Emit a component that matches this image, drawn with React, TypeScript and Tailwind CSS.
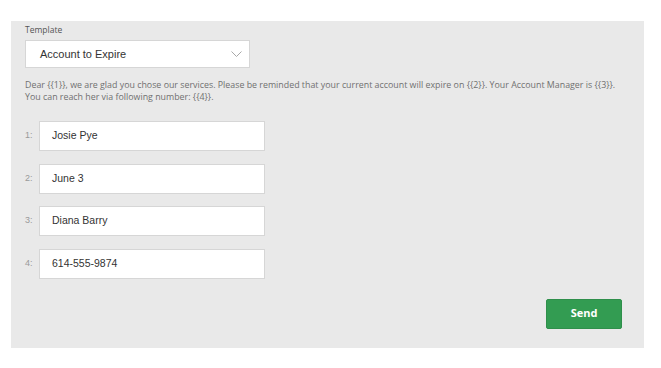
const fields = [
	{ label: '1:', value: 'Josie Pye' },
	{ label: '2:', value: 'June 3' },
	{ label: '3:', value: 'Diana Barry' },
	{ label: '4:', value: '614-555-9874' },
]

function Chevron() {
	return (
		<svg width="11" height="7" viewBox="0 0 11 7" fill="none" className="text-[#a8a8a8]">
			<path d="M0.5 0.5L5.5 5.5L10.5 0.5" stroke="currentColor" strokeWidth="1" />
		</svg>
	)
}

export default function App() {
	return (
		<div className="w-[661px] h-[368px] bg-white pt-[21px] pl-[11px]">
			<div className="w-[633px] h-[327px] bg-[#e9e9e9] px-[14px] pt-[4px] flex flex-col font-['Open_Sans',sans-serif] text-[#666]">
				<span className="text-[8.5px] leading-[10px] text-[#555]">Template</span>
				<div className="mt-[5px] w-[225px] h-[28px] bg-white border border-[#d6d6d6] flex items-center justify-between pl-[14px] pr-[7px]">
					<span className="font-['Liberation_Sans',Arial,sans-serif] text-[11px] text-[#333]">Account to Expire</span>
					<Chevron />
				</div>
				<p className="mt-[11px] text-[8.85px] leading-[12px] text-[#707070]">
					Dear {'{{1}}'}, we are glad you chose our services. Please be reminded that your current account will expire on {'{{2}}'}. Your Account Manager is {'{{3}}'}.
					<br />
					You can reach her via following number: {'{{4}}'}.
				</p>
				<div className="mt-[18px] flex flex-col gap-[12.5px]">
					{fields.map((f) => (
						<div key={f.label} className="flex items-center">
							<span className="w-[14px] text-[9px] text-[#999] font-['Liberation_Sans',Arial,sans-serif]">{f.label}</span>
							<div className="w-[226px] h-[30px] bg-white border border-[#d6d6d6] flex items-center pl-[12px]">
								<span className="font-['Liberation_Sans',Arial,sans-serif] text-[10.5px] text-[#333]">{f.value}</span>
							</div>
						</div>
					))}
				</div>
				<div className="mt-[20px] flex justify-end pr-[8px]">
					<button className="w-[76px] h-[30px] bg-[#339c52] border border-[#2f8f4b] rounded-[2px] text-white text-[11px] font-bold font-['Open_Sans',sans-serif]">
						Send
					</button>
				</div>
			</div>
		</div>
	)
}
